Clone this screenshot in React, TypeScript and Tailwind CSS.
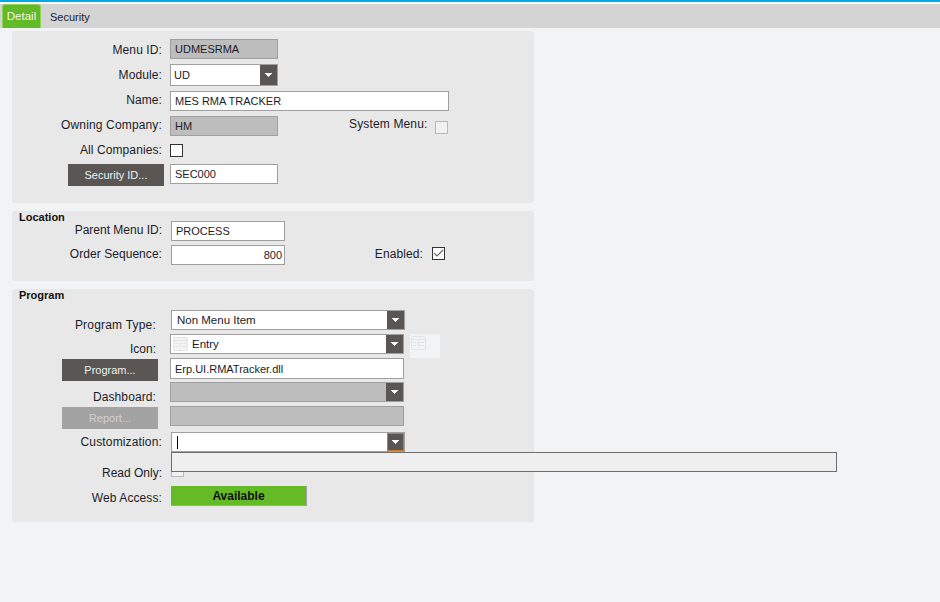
import React from "react";

const Arrow = ({ cls = "" }: { cls?: string }) => (
  <span className={`flex h-full w-[17px] shrink-0 items-center justify-center bg-[#595653] ${cls}`}>
    <svg width="7" height="4" viewBox="0 0 7 4" shapeRendering="crispEdges"><path d="M0 0h7v1H6v1H5v1H4v1H3V3H2V2H1V1H0z" fill="#fff" /></svg>
  </span>
);

const GridIcon = ({ cls }: { cls: string }) => (
  <svg className={cls} width="15" height="14" viewBox="0 0 15 14" fill="none" stroke="#e3e3e5" strokeWidth="1">
    <rect x="0.5" y="0.5" width="14" height="13" rx="1" fill="#f3f3f5" />
    <path d="M1 3.5h13M2 6.5h3M2 9.5h3M7 6.5h6M7 9.5h6M7 5.5v5" />
  </svg>
);

const Label = ({ children, cls = "" }: { children: React.ReactNode; cls?: string }) => (
  <span className={`w-[150px] shrink-0 text-right text-[12px] leading-[14px] ${cls}`}>{children}</span>
);

const Input = ({ children, cls = "" }: { children?: React.ReactNode; cls?: string }) => (
  <div className={`flex items-center border border-[#a0a0a0] pl-[4px] pt-[1px] text-[11px] leading-none ${cls}`}>{children}</div>
);

const Button = ({ children, cls = "" }: { children: React.ReactNode; cls?: string }) => (
  <div className={`flex h-[22px] w-[96px] shrink-0 items-center justify-center pt-[1px] text-[11px] ${cls}`}>{children}</div>
);

export default function App() {
  return (
    <div className="h-[602px] w-[940px] overflow-hidden bg-[#f2f3f5] font-['Liberation_Sans',Arial,sans-serif] text-[11.5px] text-[#1c1c28]">
      <div className="h-[2px] bg-[#00a9e6]" />
      <div className="flex h-[26px] items-end bg-[#fafafa]">
        <div className="flex h-[24px] w-full items-end bg-[#d4d4d4] pl-[2px]">
          <div className="flex h-[24px] w-[39px] items-center justify-center rounded-t-[3px] border border-b-0 border-[#8fd45a] bg-[#64b926] text-[#eef8e6]">Detail</div>
          <div className="flex h-[24px] items-center pl-[9px] pt-[3px] text-[11px]">Security</div>
        </div>
      </div>

      <section className="ml-[12px] mt-[3px] h-[172px] w-[522px] rounded-[3px] bg-[#e8e8e8] pt-[8px]">
        <div className="flex h-[20px] items-center gap-[8px]">
          <Label cls="translate-y-[1px] tracking-[0.1px]">Menu ID:</Label>
          <Input cls="h-[20px] w-[108px] bg-[#bdbdbd]">UDMESRMA</Input>
        </div>
        <div className="mt-[5px] flex h-[22px] items-center gap-[8px]">
          <Label cls="tracking-[0.1px]">Module:</Label>
          <div className="flex h-[22px] w-[108px] items-center border border-[#a0a0a0] bg-white pl-[3px] text-[11px]">
            <span className="flex-1">UD</span><Arrow />
          </div>
        </div>
        <div className="mt-[5px] flex h-[20px] items-center gap-[8px]">
          <Label cls="-translate-y-[1px] tracking-[0.1px]">Name:</Label>
          <Input cls="h-[20px] w-[279px] bg-white">MES RMA TRACKER</Input>
        </div>
        <div className="mt-[5px] flex h-[20px] items-center gap-[8px]">
          <Label cls="-translate-y-[1px] tracking-[0.15px]">Owning Company:</Label>
          <Input cls="h-[20px] w-[108px] bg-[#bdbdbd]">HM</Input>
          <span className="ml-[63px] w-[78px] -translate-y-[2px] whitespace-nowrap text-right text-[12px] tracking-[0.15px]">System Menu:</span>
          <span className="mt-[3px] h-[13px] w-[13px] border border-[#b9b9b9] bg-[#f1f1f1]" />
        </div>
        <div className="mt-[8px] flex h-[13px] items-center gap-[8px]">
          <Label cls="-translate-y-[1px] tracking-[0.1px]">All Companies:</Label>
          <span className="h-[13px] w-[13px] border border-[#333] bg-white" />
        </div>
        <div className="mt-[7px] flex items-start">
          <Button cls="ml-[56px] bg-[#595653] text-[#f0f0f0]">Security ID...</Button>
          <Input cls="ml-[6px] h-[20px] w-[108px] bg-white">SEC000</Input>
        </div>
      </section>

      <section className="ml-[12px] mt-[8px] h-[70px] w-[522px] rounded-[3px] bg-[#e8e8e8]">
        <div className="h-[10px] pl-[7px] text-[11px] font-bold leading-[12px] text-[#111]">Location</div>
        <div className="flex h-[20px] items-center gap-[9px]">
          <Label cls="-translate-y-[1px]">Parent Menu ID:</Label>
          <Input cls="h-[20px] w-[114px] bg-white">PROCESS</Input>
        </div>
        <div className="mt-[4px] flex h-[20px] items-center gap-[9px]">
          <Label cls="-translate-y-[1px] tracking-[0.05px]">Order Sequence:</Label>
          <Input cls="h-[20px] w-[114px] justify-end bg-white pr-[2px]">800</Input>
          <span className="ml-[80px] w-[49px] -translate-y-[1px] whitespace-nowrap text-right text-[12px] tracking-[0.1px]">Enabled:</span>
          <span className="mb-[3px] flex h-[13px] w-[13px] items-center justify-center border border-[#333] bg-white">
            <svg width="11" height="9" viewBox="0 0 11 9" fill="none"><path d="M1 4l3 3 6-6" stroke="#666" strokeWidth="1.1" /></svg>
          </span>
        </div>
      </section>

      <section className="relative ml-[12px] mt-[8px] h-[233px] w-[522px] rounded-[3px] bg-[#e8e8e8]">
        <div className="h-[21px] pl-[7px] text-[11px] font-bold leading-[12px] text-[#111]">Program</div>
        <div className="flex h-[20px] items-start">
          <Label cls="mt-[8px] pr-[6px] tracking-[0.2px]">Program Type:</Label>
          <div className="ml-[9px] flex h-[20px] w-[234px] items-center border border-[#a0a0a0] bg-white pl-[5px] pt-0 text-[11.5px]">
            <span className="flex-1 pt-[1px]">Non Menu Item</span><Arrow />
          </div>
        </div>
        <div className="mt-[4px] flex h-[20px] items-start">
          <Label cls="mt-[8px] pr-[6px]">Icon:</Label>
          <div className="ml-[8px] flex h-[20px] w-[234px] items-center border border-[#a0a0a0] bg-white pl-[2px] text-[11.5px]">
            <GridIcon cls="shrink-0" />
            <span className="ml-[4px] flex-1 pt-[1px]">Entry</span><Arrow />
          </div>
          <div className="ml-[6px] flex h-[24px] w-[30px] items-start justify-start bg-[#f2f3f5] pl-[1px] pt-[2px]"><GridIcon cls="shrink-0" /></div>
        </div>
        <div className="mt-[4px] flex items-start">
          <Button cls="ml-[50px] mt-[1px] bg-[#595653] text-[#f0f0f0]">Program...</Button>
          <Input cls="ml-[12px] h-[21px] w-[234px] bg-white text-[11.5px]">Erp.UI.RMATracker.dll</Input>
        </div>
        <div className="mt-[1px] flex h-[20px] items-start">
          <Label cls="mt-[8px] pr-[6px] tracking-[0.1px]">Dashboard:</Label>
          <div className="ml-[8px] flex h-[20px] w-[234px] border border-[#a0a0a0] bg-[#bdbdbd]">
            <span className="flex-1" /><Arrow />
          </div>
        </div>
        <div className="mt-[4px] flex items-start">
          <Button cls="ml-[50px] mt-[1px] bg-[#a3a3a3] text-[#d0d0d0]">Report...</Button>
          <Input cls="ml-[12px] h-[20px] w-[234px] bg-[#bdbdbd]" />
        </div>
        <div className="mt-[3px] flex h-[20px] items-start">
          <Label cls="mt-[3px] tracking-[0.15px]">Customization:</Label>
          <div className="ml-[9px] flex h-[20px] w-[234px] items-center border border-[#a0a0a0] bg-white pl-[5px]">
            <span className="h-[13px] w-px flex-none bg-black" />
            <span className="flex-1" />
            <Arrow cls="border border-[#c87a2c]" />
          </div>
        </div>
        <div className="mt-[12px] flex h-[13px] items-center">
          <Label cls="translate-y-[2px]">Read Only:</Label>
          <span className="ml-[9px] h-[13px] w-[13px] border border-[#b9b9b9] bg-[#f1f1f1]" />
        </div>
        <div className="mt-[9px] flex h-[20px] items-center">
          <Label cls="translate-y-[2px] tracking-[0.1px]">Web Access:</Label>
          <div className="ml-[9px] flex h-[20px] w-[136px] items-center justify-center border-b border-r border-[#a3a3a3] bg-[#64bb26] pt-[1px] text-[12px] font-bold text-[#111]">Available</div>
        </div>
        <div className="absolute left-[159px] top-[163px] h-[20px] w-[666px] border border-[#6e6e6e] bg-[#efefef]" />
      </section>
    </div>
  );
}
